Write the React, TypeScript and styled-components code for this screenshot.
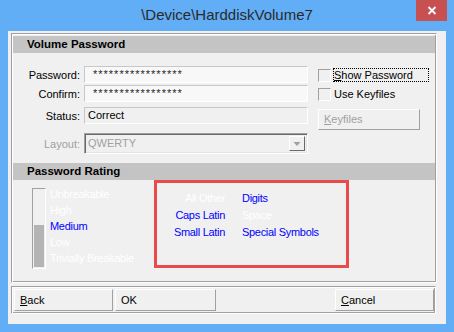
import styled, { createGlobalStyle } from "styled-components";

const GlobalStyle = createGlobalStyle`
  html, body {
    margin: 0;
    padding: 0;
  }

  body {
    font-family: "Liberation Sans", Arial, sans-serif;
    font-size: 11px;
    color: #000;
  }

  * {
    box-sizing: border-box;
  }
`;

const Window = styled.div`
  width: 454px;
  height: 332px;
  background-color: #62aef6;
  display: flex;
  flex-direction: column;
`;

const TitleBar = styled.div`
  display: grid;
  grid-template-columns: 38px 1fr 38px;
  height: 31px;
  flex-shrink: 0;
`;

const Title = styled.div`
  grid-column: 2;
  text-align: center;
  font-size: 15px;
  line-height: 30px;
  color: #2a2a2a;
  white-space: nowrap;
`;

const CloseButton = styled.div`
  width: 31px;
  height: 21px;
  background-color: #c75050;
  display: flex;
  align-items: center;
  justify-content: center;
`;

const Client = styled.div`
  flex: 1;
  margin: 0 8px 8px;
  background-color: #f0f0f0;
  padding: 2px 9px 0 3px;
  display: flex;
  flex-direction: column;
`;

const Groove = styled.div`
  border: 1px solid;
  border-color: #a0a0a0 #ffffff #ffffff #a0a0a0;
  box-shadow: inset 1px 1px 0 #ffffff, inset -1px -1px 0 #a0a0a0;
`;

const MainGroup = styled(Groove)`
  height: 250px;
  padding: 2px 1px 0 1px;
`;

const SectionHeader = styled.div`
  height: 17px;
  background-color: #c4c4c4;
  padding-left: 14px;
  font-size: 11.5px;
  font-weight: bold;
  line-height: 17px;
`;

const FormArea = styled.div`
  display: flex;
  padding: 13px 0 9px 0;
`;

const FieldsColumn = styled.div`
  width: 295px;
  display: flex;
  flex-direction: column;
`;

const Row = styled.div<{ $gap: number }>`
  display: flex;
  align-items: center;
  gap: 4px;
  margin-top: ${(p) => p.$gap}px;
`;

const Label = styled.div<{ $disabled?: boolean }>`
  width: 67px;
  text-align: right;
  color: ${(p) => (p.$disabled ? "#a0a0a0" : "#000")};
  white-space: nowrap;
`;

const TextField = styled.div<{ $fill: string; $masked?: boolean }>`
  width: 224px;
  height: 17px;
  border: 1px solid;
  border-color: #c8c8c8 #ffffff #ffffff #c8c8c8;
  background-color: ${(p) => p.$fill};
  padding-left: ${(p) => (p.$masked ? 8 : 3)}px;
  line-height: 15px;
  letter-spacing: ${(p) => (p.$masked ? "1px" : "normal")};
  color: ${(p) => (p.$masked ? "#2a2418" : "#000")};
  white-space: nowrap;
  overflow: hidden;
`;

const Combo = styled.div`
  width: 224px;
  height: 21px;
  border: 1px solid;
  border-color: #a0a0a0 #ffffff #ffffff #a0a0a0;
  box-shadow: inset 1px 1px 0 #696969, inset -1px -1px 0 #e3e3e3;
  padding: 2px 2px 2px 3px;
  display: flex;
  align-items: center;
  color: #a0a0a0;
`;

const ComboText = styled.div`
  flex: 1;
  line-height: 15px;
`;

const DropButton = styled.div`
  width: 16px;
  height: 15px;
  border: 1px solid;
  border-color: #ffffff #696969 #696969 #ffffff;
  background-color: #f0f0f0;
  display: flex;
  align-items: center;
  justify-content: center;
`;

const OptionsColumn = styled.div`
  margin-left: 10px;
  padding-top: 2px;
  display: flex;
  flex-direction: column;
`;

const CheckRow = styled.div<{ $gap: number }>`
  display: flex;
  align-items: center;
  gap: 2px;
  height: 14px;
  margin-top: ${(p) => p.$gap}px;
`;

const CheckBox = styled.div`
  width: 13px;
  height: 13px;
  border: 1px solid;
  border-color: #a0a0a0 #ffffff #ffffff #a0a0a0;
  background-color: #f0f0f0;
`;

const CheckLabel = styled.div<{ $focused?: boolean }>`
  width: 96px;
  height: 14px;
  padding-left: 0;
  line-height: 12px;
  border: 1px dotted ${(p) => (p.$focused ? "#000" : "transparent")};
  white-space: nowrap;
`;

const FlatButton = styled.div<{ $width: number; $disabled?: boolean }>`
  width: ${(p) => p.$width}px;
  height: 22px;
  border: 1px solid;
  border-color: #ffffff #a0a0a0 #a0a0a0 #ffffff;
  background-color: #f0f0f0;
  padding-left: 5px;
  line-height: 20px;
  color: ${(p) => (p.$disabled ? "#a0a0a0" : "#000")};
  white-space: nowrap;
`;

const KeyfilesButton = styled(FlatButton)`
  margin-top: 8px;
  height: 21px;
  line-height: 19px;
`;

const RatingArea = styled.div`
  display: flex;
  align-items: flex-start;
  padding-left: 19px;
`;

const StrengthBar = styled.div`
  width: 14px;
  height: 81px;
  margin-top: 8px;
  border: 1px solid;
  border-color: #a0a0a0 #ffffff #ffffff #a0a0a0;
  padding: 1px;
  display: flex;
  flex-direction: column;
  justify-content: flex-end;
`;

const StrengthFill = styled.div`
  width: 100%;
  background-color: #b4b4b4;
`;

const LevelList = styled.div`
  width: 104px;
  margin-left: 4px;
  margin-top: 6px;
  display: flex;
  flex-direction: column;
`;

const LevelItem = styled.div<{ $active: boolean }>`
  line-height: 16px;
  letter-spacing: -0.3px;
  color: ${(p) => (p.$active ? "#0000ff" : "#ffffff")};
  white-space: nowrap;
`;

const CharClassBox = styled.div`
  width: 195px;
  height: 88px;
  border: 3px solid #e84b4b;
  padding-top: 7px;
  display: grid;
  grid-template-columns: 68px auto;
  column-gap: 17px;
  align-content: start;
`;

const CharClass = styled.div<{ $present: boolean; $right?: boolean }>`
  line-height: 17px;
  letter-spacing: -0.3px;
  text-align: ${(p) => (p.$right ? "right" : "left")};
  color: ${(p) => (p.$present ? "#0000ff" : "#ffffff")};
  white-space: nowrap;
`;

const ButtonGroup = styled(Groove)`
  margin-top: 3px;
  margin-right: 1px;
  height: 28px;
  padding: 2px 1px 0 2px;
  display: flex;
  gap: 2px;
`;

const Spacer = styled.div`
  flex: 1;
`;

const levels = ["Unbreakable", "High", "Medium", "Low", "Trivially Breakable"];
const activeLevel = "Medium";
const strength = 0.545;

const charClasses = [
  { left: { name: "All Other", present: false }, right: { name: "Digits", present: true } },
  { left: { name: "Caps Latin", present: true }, right: { name: "Space", present: false } },
  { left: { name: "Small Latin", present: true }, right: { name: "Special Symbols", present: true } },
];

export default function App() {
  return (
    <>
      <GlobalStyle />
      <Window>
        <TitleBar>
          <Title>\Device\HarddiskVolume7</Title>
          <CloseButton>
            <svg width="10" height="9" viewBox="0 0 10 9">
              <path d="M1.5 1 L8.5 8 M8.5 1 L1.5 8" stroke="#fff" strokeWidth="1.8" />
            </svg>
          </CloseButton>
        </TitleBar>
        <Client>
          <MainGroup>
            <SectionHeader>Volume Password</SectionHeader>
            <FormArea>
              <FieldsColumn>
                <Row $gap={0}>
                  <Label>Password:</Label>
                  <TextField $fill="#f8f8f8" $masked>*****************</TextField>
                </Row>
                <Row $gap={2}>
                  <Label>Confirm:</Label>
                  <TextField $fill="#f8f8f8" $masked>*****************</TextField>
                </Row>
                <Row $gap={5}>
                  <Label>Status:</Label>
                  <TextField $fill="#f0f0f0">Correct</TextField>
                </Row>
                <Row $gap={9}>
                  <Label $disabled>Layout:</Label>
                  <Combo>
                    <ComboText>QWERTY</ComboText>
                    <DropButton>
                      <svg width="8" height="4" viewBox="0 0 8 4">
                        <path d="M0.5 0 L7.5 0 L4 4 Z" fill="#a0a0a0" />
                      </svg>
                    </DropButton>
                  </Combo>
                </Row>
              </FieldsColumn>
              <OptionsColumn>
                <CheckRow $gap={0}>
                  <CheckBox />
                  <CheckLabel $focused>
                    <u>S</u>how Password
                  </CheckLabel>
                </CheckRow>
                <CheckRow $gap={5}>
                  <CheckBox />
                  <CheckLabel>Use Keyfiles</CheckLabel>
                </CheckRow>
                <KeyfilesButton $width={102} $disabled>
                  <u>K</u>eyfiles
                </KeyfilesButton>
              </OptionsColumn>
            </FormArea>
            <SectionHeader>Password Rating</SectionHeader>
            <RatingArea>
              <StrengthBar>
                <StrengthFill style={{ height: `${strength * 100}%` }} />
              </StrengthBar>
              <LevelList>
                {levels.map((l) => (
                  <LevelItem key={l} $active={l === activeLevel}>
                    {l}
                  </LevelItem>
                ))}
              </LevelList>
              <CharClassBox>
                {charClasses.map((row) => [
                  <CharClass key={row.left.name} $right $present={row.left.present}>
                    {row.left.name}
                  </CharClass>,
                  <CharClass key={row.right.name} $present={row.right.present}>
                    {row.right.name}
                  </CharClass>,
                ])}
              </CharClassBox>
            </RatingArea>
          </MainGroup>
          <ButtonGroup>
            <FlatButton $width={99}>
              <u>B</u>ack
            </FlatButton>
            <FlatButton $width={101}>OK</FlatButton>
            <Spacer />
            <FlatButton $width={99}>
              <u>C</u>ancel
            </FlatButton>
          </ButtonGroup>
        </Client>
      </Window>
    </>
  );
}
